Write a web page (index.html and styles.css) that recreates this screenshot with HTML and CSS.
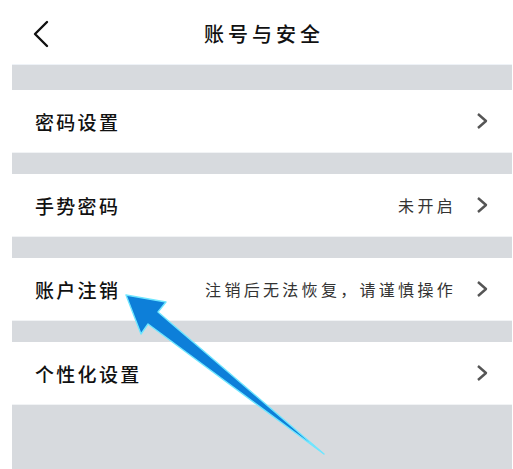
FILE: index.html
```html
<!DOCTYPE html>
<html lang="zh-CN">
<head>
<meta charset="utf-8">
<title>账号与安全</title>
<link rel="stylesheet" href="styles.css">
</head>
<body>
<div class="screen">
  <header class="topbar">
    <svg class="back" width="18" height="28" viewBox="0 0 18 28">
      <path d="M15 2 L3 14 L15 26" fill="none" stroke="#111" stroke-width="2.4" stroke-linecap="round" stroke-linejoin="round"/>
    </svg>
    <h1 class="title">账号与安全</h1>
  </header>

  <div class="gap gap-first"></div>
  <div class="row">
    <span class="label">密码设置</span>
    <span class="extra"><svg class="chev" width="12" height="18" viewBox="0 0 12 18"><path d="M2 2 L10 9 L2 16" fill="none" stroke="#555" stroke-width="2.4" stroke-linejoin="round"/></svg></span>
  </div>
  <div class="gap"></div>
  <div class="row">
    <span class="label">手势密码</span>
    <span class="extra"><span class="value">未开启</span><svg class="chev" width="12" height="18" viewBox="0 0 12 18"><path d="M2 2 L10 9 L2 16" fill="none" stroke="#555" stroke-width="2.4" stroke-linejoin="round"/></svg></span>
  </div>
  <div class="gap"></div>
  <div class="row">
    <span class="label">账户注销</span>
    <span class="extra"><span class="value">注销后无法恢复，请谨慎操作</span><svg class="chev" width="12" height="18" viewBox="0 0 12 18"><path d="M2 2 L10 9 L2 16" fill="none" stroke="#555" stroke-width="2.4" stroke-linejoin="round"/></svg></span>
  </div>
  <div class="gap"></div>
  <div class="row">
    <span class="label">个性化设置</span>
    <span class="extra"><svg class="chev" width="12" height="18" viewBox="0 0 12 18"><path d="M2 2 L10 9 L2 16" fill="none" stroke="#555" stroke-width="2.4" stroke-linejoin="round"/></svg></span>
  </div>
  <div class="filler"></div>

  <svg class="pointer" width="513" height="469" viewBox="0 0 513 469">
    <polygon points="126,295 166,302 158,312 324,454 148,324 141,334" fill="#0d7fd9" stroke="#6fe6ff" stroke-width="1.4" stroke-linejoin="round"/>
  </svg>
</div>
</body>
</html>
```

FILE: styles.css
```css
* { box-sizing: border-box; margin: 0; padding: 0; }

html, body {
  width: 513px;
  height: 469px;
  background: #fff;
  overflow: hidden;
}

body {
  font-family: "Noto Sans CJK SC", "Noto Sans", sans-serif;
  color: #111;
}

.screen {
  position: relative;
  width: 513px;
  height: 469px;
  padding-left: 12px;
  padding-right: 1px;
  display: flex;
  flex-direction: column;
}

.topbar {
  height: 65px;
  flex-shrink: 0;
  display: flex;
  align-items: center;
  justify-content: center;
  position: relative;
  border-bottom: 1px solid #eef2f7;
}

.back {
  position: absolute;
  left: 20px;
  top: 20px;
}

.title {
  font-size: 20px;
  font-weight: 500;
  letter-spacing: 4px;
  padding-left: 4px;
  margin-top: 3px;
}

.gap {
  height: 21px;
  flex-shrink: 0;
  background: #d7dade;
}

.gap-first {
  height: 25px;
}

.row {
  height: 63px;
  flex-shrink: 0;
  background: #fff;
  display: flex;
  align-items: center;
  justify-content: space-between;
  padding: 0 24px 0 23px;
  border-bottom: 1px solid #f1f3f5;
}

.label {
  font-size: 19px;
  font-weight: 500;
  letter-spacing: 2.3px;
}

.extra {
  display: flex;
  align-items: center;
  gap: 20px;
}

.value {
  font-size: 16px;
  color: #333;
  letter-spacing: 3.3px;
}

.chev {
  display: block;
}

.filler {
  flex: 1;
  background: #d7dade;
}

.pointer {
  position: absolute;
  left: 0;
  top: 0;
  pointer-events: none;
}
```
